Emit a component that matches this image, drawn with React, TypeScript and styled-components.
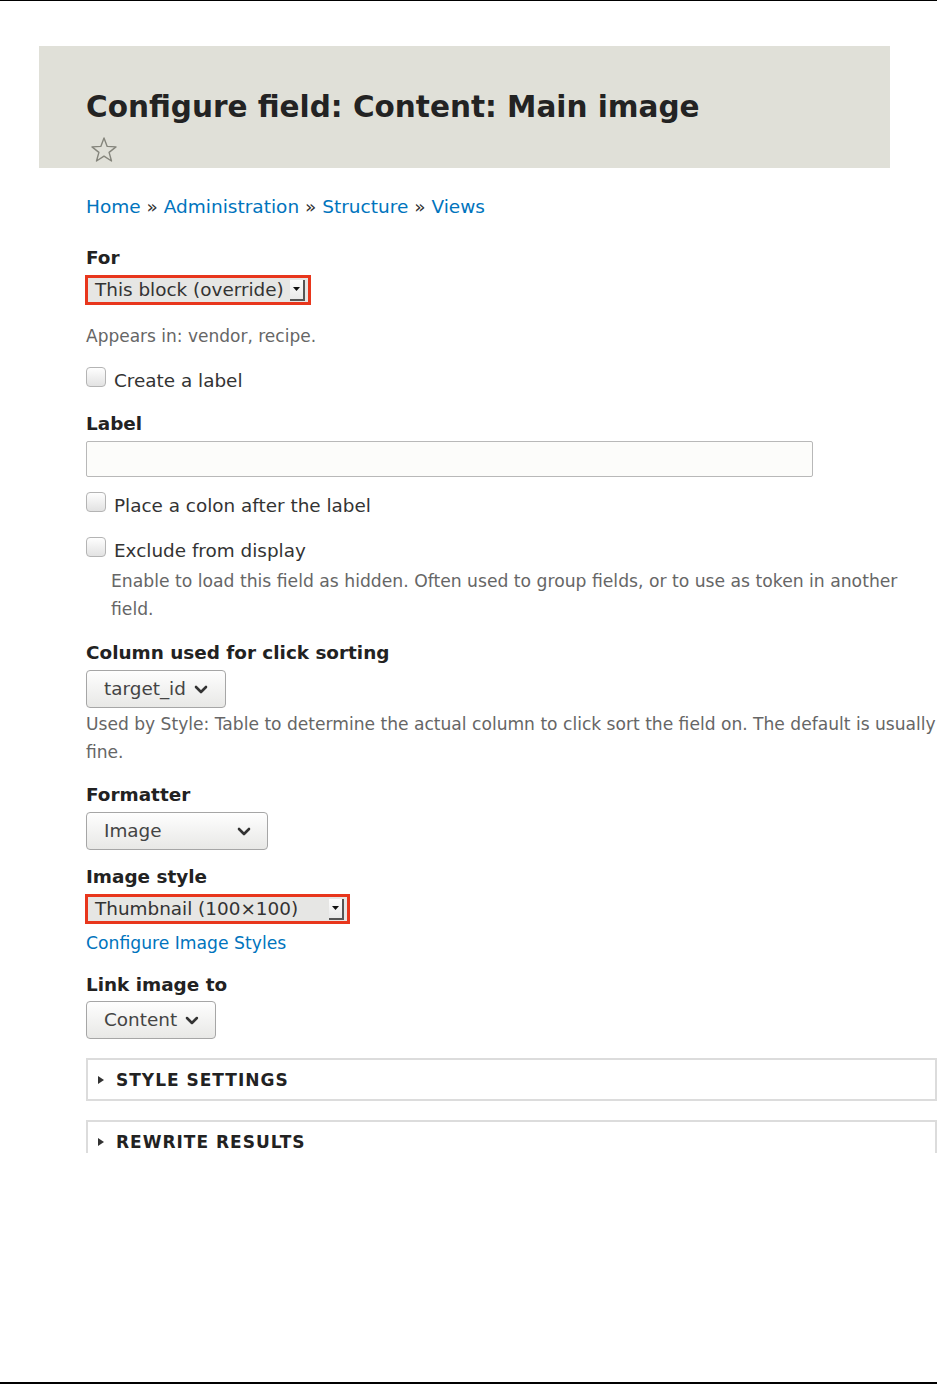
import React from "react";
import styled, { createGlobalStyle } from "styled-components";

const Global = createGlobalStyle`
  html, body { margin: 0; padding: 0; background: #fff; }
  body { font-family: "DejaVu Sans", "Liberation Sans", sans-serif; color: #333; }
  * { box-sizing: border-box; }
`;

const Page = styled.div`
  width: 937px;
  height: 1384px;
  border-top: 1px solid #000;
  border-bottom: 2px solid #000;
  overflow: hidden;
`;

const Clip = styled.div`
  height: 1152px;
  overflow: hidden;
`;

const Header = styled.header`
  margin: 45px 0 0 39px;
  width: 851px;
  height: 122px;
  background: #e0e0d8;
  padding: 41px 0 0 47px;
`;

const Title = styled.h1`
  margin: 0;
  font-size: 29.5px;
  line-height: 40px;
  font-weight: bold;
  color: #232323;
`;

const StarWrap = styled.div`
  margin: 9px 0 0 4px;
  width: 28px;
  height: 28px;
`;

const Main = styled.main`
  padding-left: 86px;
  width: 937px;
  font-size: 18.4px;
  line-height: 28px;
`;

const Breadcrumb = styled.nav`
  margin-top: 25px;
  color: #0074bd;
  font-size: 18.5px;
`;

const Sep = styled.span`
  color: #333;
`;

const Link = styled.a<{ $size?: number }>`
  color: #0074bd;
  text-decoration: none;
  font-size: ${(p) => (p.$size ? `${p.$size}px` : "inherit")};
`;

const Item = styled.div<{ $top: number }>`
  margin-top: ${(p) => p.$top}px;
`;

const Label = styled.div<{ $gap?: number }>`
  font-weight: bold;
  color: #222;
  margin-bottom: ${(p) => p.$gap ?? 3}px;
`;

const Desc = styled.div<{ $indent?: number; $top?: number; $size?: number }>`
  color: #666;
  font-size: ${(p) => p.$size ?? 17}px;
  padding-left: ${(p) => p.$indent ?? 0}px;
  margin-top: ${(p) => p.$top ?? 0}px;
`;

const RedSelect = styled.div<{ $w: number }>`
  width: ${(p) => p.$w}px;
  height: 30px;
  margin-left: -1px;
  border: 3px solid #e8361c;
  background: #e6e6e4;
  display: flex;
  align-items: center;
  justify-content: space-between;
  padding: 0 3px 0 7px;
  color: #333;
`;

const ArrowBtn = styled.span`
  width: 15px;
  height: 21px;
  background: linear-gradient(#fdfdfd, #e9e9e9);
  border-right: 2px solid #555;
  border-bottom: 2px solid #555;
  display: flex;
  align-items: center;
  justify-content: center;
`;

const ButtonSelect = styled.div<{ $w: number }>`
  width: ${(p) => p.$w}px;
  height: 38px;
  border: 1px solid #a6a6a6;
  border-radius: 4px;
  background: linear-gradient(#fefefe, #e8e8e6);
  display: flex;
  align-items: center;
  gap: 8px;
  padding: 0 16px 0 17px;
  color: #444;
  white-space: nowrap;
`;

const Grow = styled.span`
  flex: 1;
`;

const CheckRow = styled.label`
  display: flex;
  align-items: center;
  gap: 8px;
  color: #333;
`;

const Box = styled.span`
  width: 20px;
  height: 20px;
  border: 1px solid #b4b4b4;
  border-radius: 4px;
  background: linear-gradient(#fefefe, #e2e2e2);
  margin-top: -8px;
`;

const TextInput = styled.div`
  width: 727px;
  height: 36px;
  border: 1px solid #b8b8b8;
  border-radius: 2px;
  background: #fcfcfa;
`;

const Fieldset = styled.div<{ $top: number }>`
  margin-top: ${(p) => p.$top}px;
  width: 851px;
  height: 43px;
  border: 2px solid #dcdcdc;
  display: flex;
  align-items: center;
  gap: 11px;
  padding-left: 9px;
`;

const Legend = styled.span`
  font-weight: bold;
  text-transform: uppercase;
  letter-spacing: 1px;
  color: #222;
  font-size: 17px;
`;

const Chevron = () => (
  <svg width="14" height="9" viewBox="0 0 14 9">
    <polyline points="2,2 7,7 12,2" fill="none" stroke="#333" strokeWidth="2.6" strokeLinecap="round" strokeLinejoin="round" />
  </svg>
);

const Tri = () => (
  <svg width="8" height="10" viewBox="0 0 8 10">
    <polygon points="1,1 7,5 1,9" fill="#333" />
  </svg>
);

const SmallDown = () => (
  <svg width="7" height="4" viewBox="0 0 7 4">
    <polygon points="0,0 7,0 3.5,4" fill="#111" />
  </svg>
);

const Star = () => (
  <svg width="28" height="28" viewBox="0 0 28 28">
    <polygon
      points="14,2 17.2,10.4 26,10.9 19.1,16.4 21.5,25 14,20.1 6.5,25 8.9,16.4 2,10.9 10.8,10.4"
      fill="none"
      stroke="#85857c"
      strokeWidth="1.4"
      strokeLinejoin="round"
    />
  </svg>
);

export default function App() {
  return (
    <Page>
      <Global />
      <Clip>
        <Header>
          <Title>Configure field: Content: Main image</Title>
          <StarWrap>
            <Star />
          </StarWrap>
        </Header>
        <Main>
          <Breadcrumb>
            <Link>Home</Link> <Sep>»</Sep> <Link>Administration</Link> <Sep>»</Sep>{" "}
            <Link>Structure</Link> <Sep>»</Sep> <Link>Views</Link>
          </Breadcrumb>

          <Item $top={23}>
            <Label>For</Label>
            <RedSelect $w={226}>
              <span>This block (override)</span>
              <ArrowBtn>
                <SmallDown />
              </ArrowBtn>
            </RedSelect>
          </Item>

          <Desc $top={17}>Appears in: vendor, recipe.</Desc>

          <Item $top={17}>
            <CheckRow>
              <Box />
              Create a label
            </CheckRow>
          </Item>

          <Item $top={15}>
            <Label>Label</Label>
            <TextInput />
          </Item>

          <Item $top={15}>
            <CheckRow>
              <Box />
              Place a colon after the label
            </CheckRow>
          </Item>

          <Item $top={17}>
            <CheckRow>
              <Box />
              Exclude from display
            </CheckRow>
            <Desc $indent={25} $top={2} $size={17.2}>
              Enable to load this field as hidden. Often used to group fields, or to use as token in another field.
            </Desc>
          </Item>

          <Item $top={16}>
            <Label>Column used for click sorting</Label>
            <ButtonSelect $w={140}>
              <span>target_id</span>
              <Chevron />
            </ButtonSelect>
            <Desc $top={2} $size={17.1}>
              Used by Style: Table to determine the actual column to click sort the field on. The default is usually fine.
            </Desc>
          </Item>

          <Item $top={15}>
            <Label>Formatter</Label>
            <ButtonSelect $w={182}>
              <Grow>Image</Grow>
              <Chevron />
            </ButtonSelect>
          </Item>

          <Item $top={13}>
            <Label>Image style</Label>
            <RedSelect $w={265}>
              <span>Thumbnail (100×100)</span>
              <ArrowBtn>
                <SmallDown />
              </ArrowBtn>
            </RedSelect>
          </Item>

          <Item $top={5}>
            <Link $size={17.2}>Configure Image Styles</Link>
          </Item>

          <Item $top={14}>
            <Label $gap={2}>Link image to</Label>
            <ButtonSelect $w={130}>
              <span>Content</span>
              <Chevron />
            </ButtonSelect>
          </Item>

          <Fieldset $top={19}>
            <Tri />
            <Legend>Style settings</Legend>
          </Fieldset>
          <Fieldset $top={19}>
            <Tri />
            <Legend>Rewrite results</Legend>
          </Fieldset>
        </Main>
      </Clip>
    </Page>
  );
}
